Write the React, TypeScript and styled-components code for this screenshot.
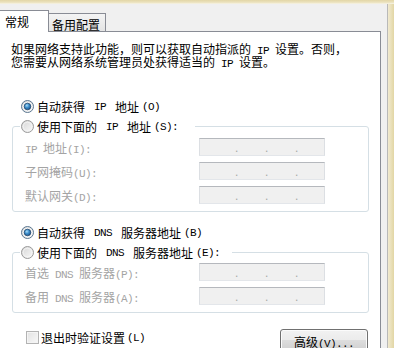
import React from "react";
import styled, { createGlobalStyle } from "styled-components";

const GlobalStyle = createGlobalStyle`
  html, body { margin: 0; padding: 0; background: #f0f0f0; }
  body {
    width: 394px; height: 348px; overflow: hidden;
    font-family: "Noto Sans CJK SC", "Noto Sans", sans-serif;
    font-size: 12px; line-height: 13px; color: #000;
  }
`;

const Window = styled.div`
  width: 394px; height: 348px; overflow: hidden;
  display: flex; flex-direction: column;
  background: #f0f0f0;
`;

const TopFrame = styled.div`
  height: 4px; flex: none;
  background: linear-gradient(#e2d6a6, #ece3c0 60%, #f7f4e8);
`;

const Main = styled.div`
  display: flex; flex: 1; min-height: 0;
`;

const Dialog = styled.div`
  width: 387px; flex: none; padding-top: 6px;
  background: #f0f0f0; overflow: hidden;
`;

const DialogInner = styled.div`
  margin-left: -1px;
  display: flex; flex-direction: column;
`;

const RightFrame = styled.div`
  flex: 1; border-left: 1px solid #b9b9b9;
  background: linear-gradient(90deg, #f1ead0, #e2d6a5);
`;

const TabRow = styled.div`
  display: flex; align-items: flex-end;
  height: 22px; margin-bottom: -1px;
  position: relative; z-index: 1;
`;

const Tab = styled.div<{ $active?: boolean }>`
  box-sizing: border-box;
  display: flex; align-items: center;
  border: 1px solid #898c95;
  border-bottom: none;
  ${(p) =>
    p.$active
      ? `width: 50px; height: 22px; padding-left: 5px; background: #fff;`
      : `width: 57px; height: 18px; margin-bottom: 1px; padding-left: 3px; padding-top: 3px;
         border-left: none; background: linear-gradient(#f4f4f4, #e4e4e4);`}
`;

const Panel = styled.div`
  box-sizing: border-box;
  width: 382px; min-height: 340px;
  border: 1px solid #898c95; border-bottom: none;
  background: #fff;
  display: flex; flex-direction: column;
`;

const Para = styled.p`
  margin: 10px 0 0 11px;
  white-space: nowrap;
`;

const Latin = styled.span`
  font-family: "Liberation Mono", monospace;
  font-size: 11px; letter-spacing: -0.6px;
  line-height: 0;
  white-space: pre;
`;

function Mixed({ text }: { text: string }) {
  const parts = text.split(/([\x20-\x7e]+)/).filter(Boolean);
  return (
    <>
      {parts.map((p, i) =>
        /^[\x20-\x7e]+$/.test(p) ? <Latin key={i}>{p}</Latin> : <React.Fragment key={i}>{p}</React.Fragment>
      )}
    </>
  );
}

const RadioRow = styled.div<{ $top?: number; $left?: number }>`
  display: flex; align-items: center; gap: 3px;
  height: 13px;
  margin-top: ${(p) => p.$top ?? 0}px;
  padding-left: ${(p) => p.$left ?? 0}px;
  white-space: nowrap;
`;

function RadioIcon({ checked }: { checked?: boolean }) {
  return (
    <svg width="13" height="13" viewBox="0 0 13 13" style={{ flex: "none" }}>
      <defs>
        <linearGradient id="rbFill" x1="0" y1="0" x2="1" y2="1">
          <stop offset="0" stopColor="#d4d4d4" />
          <stop offset="1" stopColor="#fbfbfb" />
        </linearGradient>
        <radialGradient id="rbDot" cx="40%" cy="35%" r="70%">
          <stop offset="0" stopColor="#a9dcf8" />
          <stop offset="0.45" stopColor="#3d8fcc" />
          <stop offset="1" stopColor="#1b4f86" />
        </radialGradient>
      </defs>
      <circle cx="6.5" cy="6.5" r="6" fill="url(#rbFill)" stroke={checked ? "#5b7790" : "#9a9a9a"} strokeWidth="1" />
      <circle cx="6.5" cy="6.5" r="4.3" fill="none" stroke="#f6f6f6" strokeWidth="0.8" />
      {checked && <circle cx="6.5" cy="6.5" r="3.3" fill="url(#rbDot)" stroke="#1a3f66" strokeWidth="0.7" />}
    </svg>
  );
}

const Group = styled.fieldset<{ $pt: number }>`
  margin: 7px 11px 0 12px;
  padding: ${(p) => p.$pt}px 0 7px 7px;
  border: 1px solid #d5dfe5;
  border-radius: 3px;
  min-width: 0;
`;

const Legend = styled.legend<{ $width: number }>`
  box-sizing: border-box;
  width: ${(p) => p.$width}px;
  padding: 0 0 0 1px;
`;

const Fields = styled.div`
  display: grid;
  grid-template-columns: 174px 126px;
  row-gap: 6px;
  padding-left: 5px;
  align-items: center;
`;

const FieldLabel = styled.span`
  color: #a4a4a4;
  white-space: nowrap;
`;

const IpBox = styled.div`
  box-sizing: border-box;
  width: 126px; height: 18px;
  border: 1px solid;
  border-color: #b5b8bd #dcdfe3 #e3e6ea #dcdfe3;
  background: #f0f0f0;
  display: flex; align-items: flex-end;
  padding: 0 0 3px 8px;
`;

const Segment = styled.span`
  width: 27px; flex: none;
`;

const Dot = styled.span`
  width: 3px; flex: none;
  font-family: "Liberation Sans", sans-serif;
  font-size: 12px; line-height: 8px;
  color: #a8a8a8;
`;

function IpField() {
  return (
    <IpBox>
      <Segment />
      <Dot>.</Dot>
      <Segment />
      <Dot>.</Dot>
      <Segment />
      <Dot>.</Dot>
    </IpBox>
  );
}

const Footer = styled.div`
  display: flex; justify-content: space-between; align-items: flex-start;
  margin: 16px 12px 0 26px;
`;

const CheckRow = styled.label`
  display: flex; align-items: center; gap: 2px;
  margin-top: 2px; height: 13px;
  white-space: nowrap;
`;

const CheckBox = styled.span`
  box-sizing: border-box;
  width: 13px; height: 13px; flex: none;
  border: 1px solid #b3b3b3;
  background: linear-gradient(135deg, #e2e2e2, #f8f8f8);
  box-shadow: inset 0 0 0 1px #f4f4f4;
`;

const Button = styled.button`
  box-sizing: border-box;
  width: 88px; height: 23px;
  border: 1px solid #707070; border-radius: 3px;
  background: linear-gradient(#f2f2f2 0%, #ebebeb 50%, #dddddd 50%, #cfcfcf 100%);
  box-shadow: inset 0 0 0 1px #fbfbfb;
  font: inherit; color: #000;
  padding: 0; padding-top: 1px;
`;

export default function App() {
  return (
    <>
      <GlobalStyle />
      <Window>
        <TopFrame />
        <Main>
          <Dialog>
            <DialogInner>
              <TabRow>
                <Tab $active>常规</Tab>
                <Tab>备用配置</Tab>
              </TabRow>
              <Panel>
                <Para>
                  <Mixed text="如果网络支持此功能，则可以获取自动指派的 IP 设置。否则，" />
                  <br />
                  <Mixed text="您需要从网络系统管理员处获得适当的 IP 设置。" />
                </Para>

                <RadioRow $top={32} $left={21}>
                  <RadioIcon checked />
                  <Mixed text="自动获得 IP 地址(O)" />
                </RadioRow>
                <Group $pt={5}>
                  <Legend $width={175}>
                    <RadioRow>
                      <RadioIcon />
                      <Mixed text="使用下面的 IP 地址(S):" />
                    </RadioRow>
                  </Legend>
                  <Fields>
                    <FieldLabel><Mixed text="IP 地址(I):" /></FieldLabel>
                    <IpField />
                    <FieldLabel><Mixed text="子网掩码(U):" /></FieldLabel>
                    <IpField />
                    <FieldLabel><Mixed text="默认网关(D):" /></FieldLabel>
                    <IpField />
                  </Fields>
                </Group>

                <RadioRow $top={14} $left={21}>
                  <RadioIcon checked />
                  <Mixed text="自动获得 DNS 服务器地址(B)" />
                </RadioRow>
                <Group $pt={4}>
                  <Legend $width={212}>
                    <RadioRow>
                      <RadioIcon />
                      <Mixed text="使用下面的 DNS 服务器地址(E):" />
                    </RadioRow>
                  </Legend>
                  <Fields>
                    <FieldLabel><Mixed text="首选 DNS 服务器(P):" /></FieldLabel>
                    <IpField />
                    <FieldLabel><Mixed text="备用 DNS 服务器(A):" /></FieldLabel>
                    <IpField />
                  </Fields>
                </Group>

                <Footer>
                  <CheckRow>
                    <CheckBox />
                    <Mixed text="退出时验证设置(L)" />
                  </CheckRow>
                  <Button><Mixed text="高级(V)..." /></Button>
                </Footer>
              </Panel>
            </DialogInner>
          </Dialog>
          <RightFrame />
        </Main>
      </Window>
    </>
  );
}
